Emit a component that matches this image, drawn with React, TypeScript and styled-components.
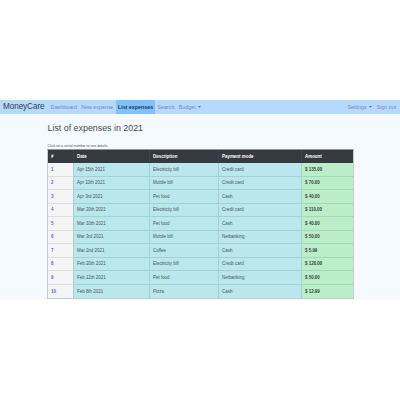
import React from "react";
import styled, { createGlobalStyle } from "styled-components";

const GlobalStyle = createGlobalStyle`
  body { margin: 0; background: #fff; font-family: "Liberation Sans", Arial, sans-serif; }
`;

const Frame = styled.div`
  box-sizing: border-box;
  width: 400px;
  height: 400px;
  padding: 100px 0;
  overflow: hidden;
`;

const Page = styled.main`
  height: 199.5px;
  background: #f4faff;
`;

const Navbar = styled.nav`
  display: flex;
  align-items: center;
  box-sizing: border-box;
  height: 13.6px;
  padding: 0 1.6px 0 3px;
  background: #b6daff;
`;

const Brand = styled.span`
  width: 45.6px;
  font-size: 8.2px;
  letter-spacing: -0.09px;
  line-height: 13px;
  color: #35414d;
  white-space: nowrap;
`;

const NavItem = styled.a<{ $active?: boolean }>`
  display: flex;
  align-items: center;
  height: 100%;
  padding: 0 2.2px;
  font-size: 5.34px;
  font-weight: ${(p) => (p.$active ? 700 : 400)};
  color: ${(p) => (p.$active ? "#22384d" : "#768b9f")};
  background: ${(p) => (p.$active ? "#80c0fb" : "transparent")};
  white-space: nowrap;
`;

const CaretIcon = styled.svg`
  width: 3px;
  height: 2px;
  margin-left: 2.6px;
  fill: #5b7085;
`;

const Caret = () => (
  <CaretIcon viewBox="0 0 3 2">
    <path d="M0 0h3L1.5 1.7z" />
  </CaretIcon>
);

const Spacer = styled.div`
  flex: 1;
`;

const Content = styled.section`
  width: 307px;
  margin-left: 47px;
`;

const Title = styled.h1`
  margin: 0;
  padding: 9.4px 0 0 0.5px;
  height: 20.2px;
  font-size: 8.87px;
  line-height: 11px;
  font-weight: 400;
  color: #454b51;
`;

const Hint = styled.p`
  box-sizing: border-box;
  margin: 0;
  padding: 0.8px 0 0 0.5px;
  height: 5.8px;
  font-size: 3.56px;
  line-height: 5px;
  color: #4d5357;
`;

const Table = styled.div`
  box-sizing: border-box;
  border: 1px solid #c3cbd0;
  border-top-color: #8d9397;
`;

const Row = styled.div<{ $head?: boolean }>`
  display: grid;
  grid-template-columns: 26px 76px 69px 83px 1fr;
  height: ${(p) => (p.$head ? "13.1px" : "13.5px")};
  font-size: 4.45px;
  color: ${(p) => (p.$head ? "#fff" : "#46565b")};
  background: ${(p) => (p.$head ? "#343a40" : "transparent")};
  font-weight: ${(p) => (p.$head ? 700 : 400)};

  &:last-child > * { border-bottom: 0; }
`;

const HeadCell = styled.div`
  display: flex;
  align-items: center;
  padding-left: 3px;
  border-right: 1px solid #3d444a;
  &:last-child { border-right: 0; }
`;

const tones = {
  serial: { bg: "#f5f5f5", line: "#dedede", text: "#5f60e6", weight: 700 },
  info: { bg: "#b9e7ec", line: "#a7cfd2", text: "#46565b", weight: 400 },
  amount: { bg: "#baeec9", line: "#a8d5b5", text: "#34463a", weight: 700 },
};

const Cell = styled.div<{ $tone: keyof typeof tones }>`
  display: flex;
  align-items: center;
  padding-left: 3px;
  background: ${(p) => tones[p.$tone].bg};
  color: ${(p) => tones[p.$tone].text};
  font-weight: ${(p) => tones[p.$tone].weight};
  border-right: 1px solid #a5cfd3;
  border-bottom: 1px solid ${(p) => tones[p.$tone].line};
  &:last-child { border-right: 0; }
`;

const headings = ["#", "Date", "Description", "Payment mode", "Amount"];

const expenses = [
  ["Apr 15th 2021", "Electricity bill", "Credit card", "135.00"],
  ["Apr 10th 2021", "Mobile bill", "Credit card", "70.00"],
  ["Apr 3rd 2021", "Pet food", "Cash", "40.00"],
  ["Mar 20th 2021", "Electricity bill", "Credit card", "110.00"],
  ["Mar 10th 2021", "Pet food", "Cash", "40.00"],
  ["Mar 3rd 2021", "Mobile bill", "Netbanking", "50.00"],
  ["Mar 2nd 2021", "Coffee", "Cash", "5.99"],
  ["Feb 20th 2021", "Electricity bill", "Credit card", "120.00"],
  ["Feb 12th 2021", "Pet food", "Netbanking", "50.00"],
  ["Feb 8th 2021", "Pizza", "Cash", "12.99"],
];

export default function App() {
  return (
    <Frame>
      <GlobalStyle />
      <Page>
        <Navbar>
          <Brand>MoneyCare</Brand>
          <NavItem>Dashboard</NavItem>
          <NavItem>New expense</NavItem>
          <NavItem $active>List expenses</NavItem>
          <NavItem>Search</NavItem>
          <NavItem>Budget<Caret /></NavItem>
          <Spacer />
          <NavItem>Settings<Caret /></NavItem>
          <NavItem>Sign out</NavItem>
        </Navbar>
        <Content>
          <Title>List of expenses in 2021</Title>
          <Hint>Click on a serial number to see details.</Hint>
          <Table>
            <Row $head>
              {headings.map((h) => <HeadCell key={h}>{h}</HeadCell>)}
            </Row>
            {expenses.map(([date, description, mode, amount], i) => (
              <Row key={date}>
                <Cell $tone="serial">{i + 1}</Cell>
                <Cell $tone="info">{date}</Cell>
                <Cell $tone="info">{description}</Cell>
                <Cell $tone="info">{mode}</Cell>
                <Cell $tone="amount">$ {amount}</Cell>
              </Row>
            ))}
          </Table>
        </Content>
      </Page>
    </Frame>
  );
}
